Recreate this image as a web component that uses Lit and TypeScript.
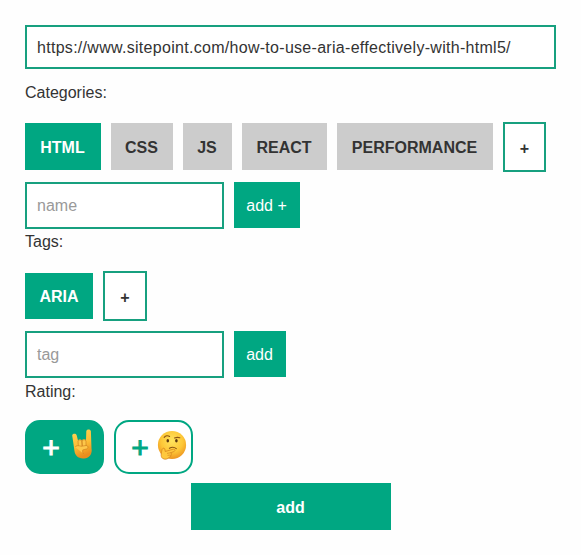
import { LitElement, html, css, svg } from "lit";
import { customElement } from "lit/decorators.js";

const horns = html`<svg class="emoji horns" viewBox="0 0 20 30" aria-hidden="true">${svg`
  <defs><linearGradient id="skin" x1="0" y1="0" x2="0.3" y2="1">
    <stop offset="0" stop-color="#ffd75a"/><stop offset=".6" stop-color="#fdbd35"/><stop offset="1" stop-color="#e88d1e"/>
  </linearGradient></defs>
  <path fill="url(#skin)" d="M.2 6.6C0 4.4 3.9 3.9 4.6 6L6 11.6C6.6 10.2 9 10 10 11.4C10.9 10 13.1 10 14 11L14.3 2.2C14.5 -.1 18.6 -.1 18.9 2.2L19.5 19.5C20.5 24.8 17.4 29.2 12.2 29.4C6.4 30 2.9 26.4 2.4 21.5C1.9 16.5 .8 11.5 .2 6.6Z"/>
  <path fill="#fdc74a" stroke="#c8791b" stroke-width=".6" d="M6 12C6.4 10.6 9 10.2 9.8 12L10.2 16.6C9.8 18.5 6.8 18.5 6.3 16.8ZM10 12C10.8 10.2 13.4 10.2 14 12L14 16.4C13.5 18 10.7 18 10.2 16.5Z"/>
  <path fill="#fec74b" stroke="#c8791b" stroke-width=".6" d="M3.2 18C5 15.6 7.6 17.2 9.8 17.2L14 16.5C16.3 16.5 16.7 19.4 14.4 20L10.8 20.9C10.3 23 10.7 24.1 11.7 25"/>
`}</svg>`;

const thinking = html`<svg class="emoji thinking" viewBox="0 0 30 30" aria-hidden="true">${svg`
  <defs><radialGradient id="face" cx=".5" cy=".35" r=".65">
    <stop offset="0" stop-color="#ffe45e"/><stop offset=".6" stop-color="#fdc737"/><stop offset="1" stop-color="#ed9421"/>
  </radialGradient></defs>
  <circle cx="15" cy="15" r="14.1" fill="url(#face)"/>
  <ellipse cx="10.8" cy="10.8" rx="1.3" ry="1.8" fill="#5b3710"/>
  <ellipse cx="19.4" cy="10.8" rx="1.3" ry="1.8" fill="#5b3710"/>
  <path fill="none" stroke="#8b5413" stroke-width="1.1" stroke-linecap="round" d="M7.2 7.4C8.6 5.5 11 5.3 12.6 6.5M17.5 8C19.2 7.4 21.3 7.2 22.8 7.8M12.4 18.3C14.8 16.8 17.4 17 19.3 18.6"/>
  <path fill="#ffc83e" stroke="#d78520" stroke-width=".8" stroke-linejoin="round" d="M5.2 19.2C6 17.5 8 17.9 8 20L8.2 21.5C10.8 20.8 13 20.1 16.2 19.2C18.2 18.8 18.6 20.9 16.8 21.6L13.3 22.8C14.8 22.8 14.9 24.6 13.8 25C14.4 26.4 13.2 27.2 12.3 27.2C10.8 29.3 7.6 29.9 5.5 28.3C3.3 26.5 4.3 22.4 5.2 19.2Z"/>
  <path fill="none" stroke="#d78520" stroke-width=".7" d="M13.3 22.8L10 23.4M13.8 25L10.5 25.3"/>
`}</svg>`;

@customElement("app-root")
export class AppRoot extends LitElement {
  static styles = css`
    :host {
      display: block;
      box-sizing: border-box;
      height: 555px;
      padding: 25px 25px 0;
      background: #fefefe;
      color: #333;
      font: 16px/20px "Liberation Sans", Arial, sans-serif;
    }
    * { box-sizing: border-box; }
    form { display: flex; flex-direction: column; }
    input, button { font: inherit; color: inherit; border-radius: 0; margin: 0; outline: 0; }
    input { border: 2px solid #17a07f; background: #fff; padding: 0 10px; height: 47px; width: 199px; }
    input::placeholder { color: #999; opacity: 1; }
    .url { width: 531px; height: 44px; padding-top: 1px; letter-spacing: 0.29px; }
    .label { height: 20px; }
    .categories-label { margin-top: 14px; }
    .tags-label { margin-top: 3px; }
    .rating-label { margin-top: 4px; }
    .row { display: flex; gap: 10px; }
    .chips { align-items: center; height: 50px; margin-top: 19px; }
    button { border: 0; padding: 0; height: 47px; background: #ccc; flex: none; white-space: nowrap; }
    .chip { height: 47px; padding: 3px 1px 0 0; font-weight: bold; }
    .category-chips .chip:not(.more) { margin-bottom: 2px; }
    .on { background: #00a782; color: #fff; }
    .chip.more { background: #fff; border: 2px solid #17a07f; width: 43px; height: 50px; padding: 4px 0 0; }
    .w-html { width: 76px; } .w-css { width: 62px; } .w-js { width: 49px; }
    .w-react { width: 85px; } .w-perf { width: 156px; }
    .chip.w-aria { width: 68px; height: 46px; padding: 1px 0 0; }
    .chip.wide { width: 44px; }
    .entry { margin-top: 10px; height: 47px; }
    .add { height: 46px; width: 52px; padding: 2px 1px 0 0; }
    .add.plus { width: 66px; }
    .ratings { margin-top: 18px; }
    .rate {
      display: flex; width: 79px; height: 54px; padding-left: 15px;
      border: 2px solid #00a782; border-radius: 15px;
    }
    .rate span { font-size: 30px; line-height: 50px; width: 18px; padding-top: 1px; -webkit-text-stroke: 1px currentColor; }
    .off { background: #fff; color: #00a782; }
    .emoji { display: block; flex: none; }
    .horns { width: 20px; height: 30px; margin: 7px 0 0 12px; }
    .thinking { width: 30px; height: 30px; margin: 8px 0 0 8px; }
    .submit { width: 200px; height: 47px; margin: 9px 0 0 166px; padding: 2px 1px 0 0; font-weight: bold; }
  `;

  render() {
    return html`<form @submit=${(e: Event) => e.preventDefault()}>
      <input class="url" aria-label="URL" .value=${"https://www.sitepoint.com/how-to-use-aria-effectively-with-html5/"} />
      <div class="label categories-label">Categories:</div>
      <div class="row chips category-chips">
        <button type="button" class="chip on w-html">HTML</button>
        <button type="button" class="chip w-css">CSS</button>
        <button type="button" class="chip w-js">JS</button>
        <button type="button" class="chip w-react">REACT</button>
        <button type="button" class="chip w-perf">PERFORMANCE</button>
        <button type="button" class="chip more">+</button>
      </div>
      <div class="row entry">
        <input placeholder="name" /><button type="button" class="on add plus">add +</button>
      </div>
      <div class="label tags-label">Tags:</div>
      <div class="row chips">
        <button type="button" class="chip on w-aria">ARIA</button>
        <button type="button" class="chip more wide">+</button>
      </div>
      <div class="row entry">
        <input placeholder="tag" /><button type="button" class="on add">add</button>
      </div>
      <div class="label rating-label">Rating:</div>
      <div class="row ratings">
        <button type="button" class="rate on"><span>+</span>${horns}</button>
        <button type="button" class="rate off"><span>+</span>${thinking}</button>
      </div>
      <button class="on submit">add</button>
    </form>`;
  }
}
